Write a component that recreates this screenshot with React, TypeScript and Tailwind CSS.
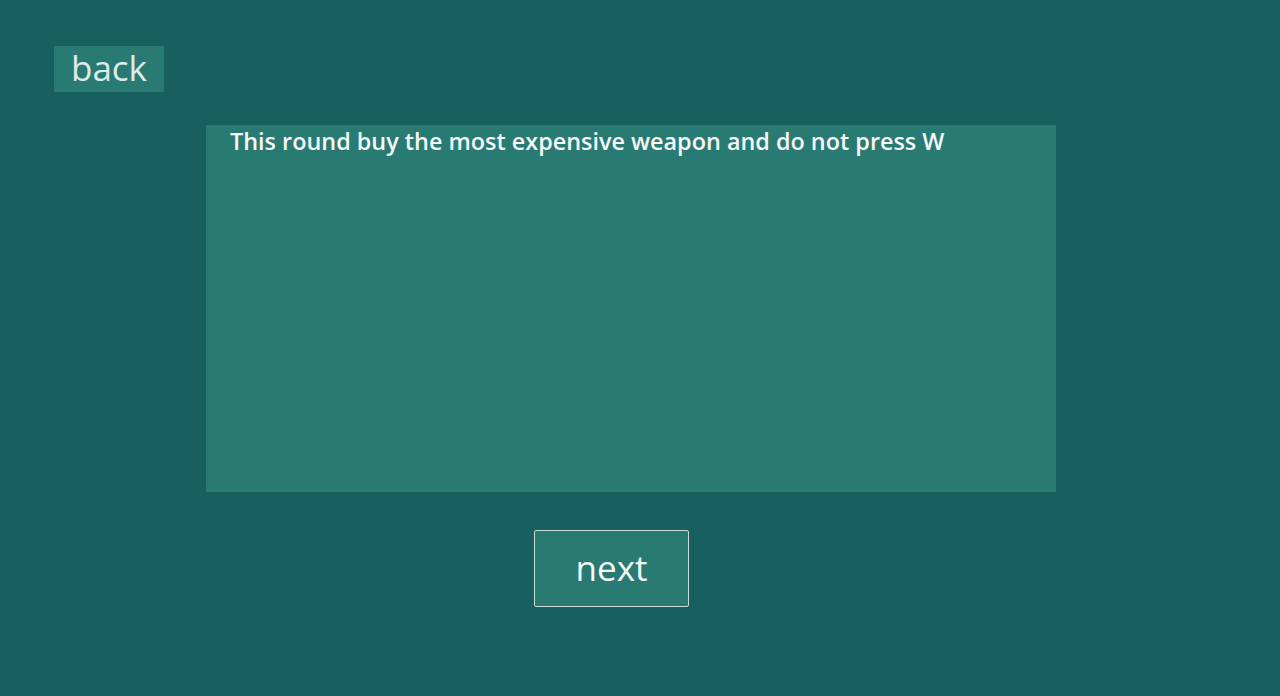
export default function App() {
  return (
    <main
      className="w-screen h-[696px] bg-[#186060] flex flex-col"
      style={{ fontFamily: '"Open Sans", "Noto Sans", sans-serif' }}
    >
      <div className="pt-[46px] pl-[54px]">
        <button className="w-[110px] h-[46px] bg-[#2a7a74] text-[#dfe9e7] text-[35px] leading-none flex items-center justify-center pb-[3px]">
          back
        </button>
      </div>
      <section className="ml-[206px] mt-[33px] w-[850px] h-[367px] bg-[#2a7a74] px-[24px] pt-[4px]">
        <p className="text-[23.4px] font-semibold text-[#f4f8f7] leading-[24px]">
          This round buy the most expensive weapon and do not press W
        </p>
      </section>
      <div className="ml-[534px] mt-[38px]">
        <button className="w-[155px] h-[77px] border border-[#c8dcd8] rounded-[2px] bg-[#2a7a74] text-[#f4f8f7] text-[35px] leading-none flex items-center justify-center pb-[2px]">
          next
        </button>
      </div>
    </main>
  )
}
